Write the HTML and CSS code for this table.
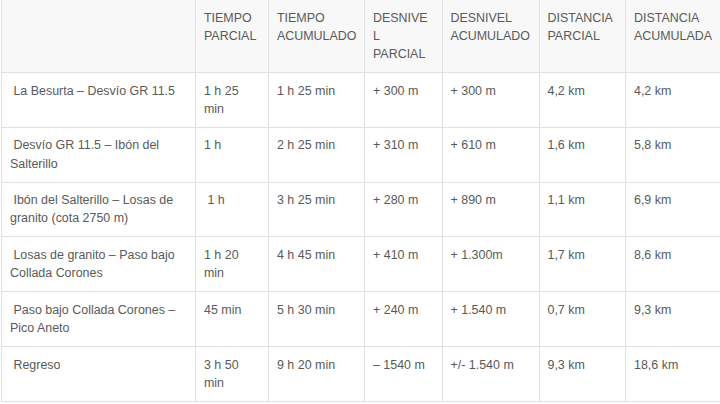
FILE: index.html
```html
<!DOCTYPE html>
<html lang="es">
<head>
<meta charset="utf-8">
<title>Tabla de tiempos</title>
<link rel="stylesheet" href="styles.css">
</head>
<body>
<table class="route">
  <colgroup>
    <col class="c1"><col class="c2"><col class="c3"><col class="c4"><col class="c5"><col class="c6"><col class="c7">
  </colgroup>
  <thead>
    <tr>
      <th></th>
      <th>TIEMPO PARCIAL</th>
      <th>TIEMPO ACUMULADO</th>
      <th>DESNIVEL PARCIAL</th>
      <th>DESNIVEL ACUMULADO</th>
      <th>DISTANCIA PARCIAL</th>
      <th>DISTANCIA ACUMULADA</th>
    </tr>
  </thead>
  <tbody>
    <tr>
      <td>&nbsp;La Besurta – Desvío GR 11.5</td>
      <td>1 h 25 min</td>
      <td>1 h 25 min</td>
      <td>+ 300 m</td>
      <td>+ 300 m</td>
      <td>4,2 km</td>
      <td>4,2 km</td>
    </tr>
    <tr>
      <td>&nbsp;Desvío GR 11.5 – Ibón del Salterillo</td>
      <td>1 h</td>
      <td>2 h 25 min</td>
      <td>+ 310 m</td>
      <td>+ 610 m</td>
      <td>1,6 km</td>
      <td>5,8 km</td>
    </tr>
    <tr>
      <td>&nbsp;Ibón del Salterillo – Losas de granito (cota 2750 m)</td>
      <td>&nbsp;1 h</td>
      <td>3 h 25 min</td>
      <td>+ 280 m</td>
      <td>+ 890 m</td>
      <td>1,1 km</td>
      <td>6,9 km</td>
    </tr>
    <tr>
      <td>&nbsp;Losas de granito – Paso bajo Collada Corones</td>
      <td>1 h 20 min</td>
      <td>4 h 45 min</td>
      <td>+ 410 m</td>
      <td>+ 1.300m</td>
      <td>1,7 km</td>
      <td>8,6 km</td>
    </tr>
    <tr>
      <td>&nbsp;Paso bajo Collada Corones – Pico Aneto</td>
      <td>45 min</td>
      <td>5 h 30 min</td>
      <td>+ 240 m</td>
      <td>+ 1.540 m</td>
      <td>0,7 km</td>
      <td>9,3 km</td>
    </tr>
    <tr>
      <td>&nbsp;Regreso</td>
      <td>3 h 50 min</td>
      <td>9 h 20 min</td>
      <td>– 1540 m</td>
      <td>+/- 1.540 m</td>
      <td>9,3 km</td>
      <td>18,6 km</td>
    </tr>
  </tbody>
</table>
</body>
</html>
```
FILE: styles.css
```css
html, body {
  margin: 0;
  padding: 0;
  background: #ffffff;
}

body {
  font-family: "Liberation Sans", Arial, sans-serif;
  font-size: 12.45px;
  line-height: 18.2px;
  color: #5a5a5a;
  overflow: hidden;
}

.route {
  table-layout: fixed;
  border-collapse: collapse;
  width: 720px;
  margin-left: 1px;
}

.c1 { width: 194px; }
.c2 { width: 73px; }
.c3 { width: 96px; }
.c4 { width: 77.5px; }
.c5 { width: 97px; }
.c6 { width: 86.5px; }
.c7 { width: 96px; }

.route th,
.route td {
  border: 1px solid #e1e1e1;
  padding: 8.7px 7px 8.7px 8px;
  text-align: left;
  vertical-align: top;
  font-weight: normal;
  overflow-wrap: anywhere;
}

.route thead th {
  background: #f8f8f8;
  border-top: none;
}
```
